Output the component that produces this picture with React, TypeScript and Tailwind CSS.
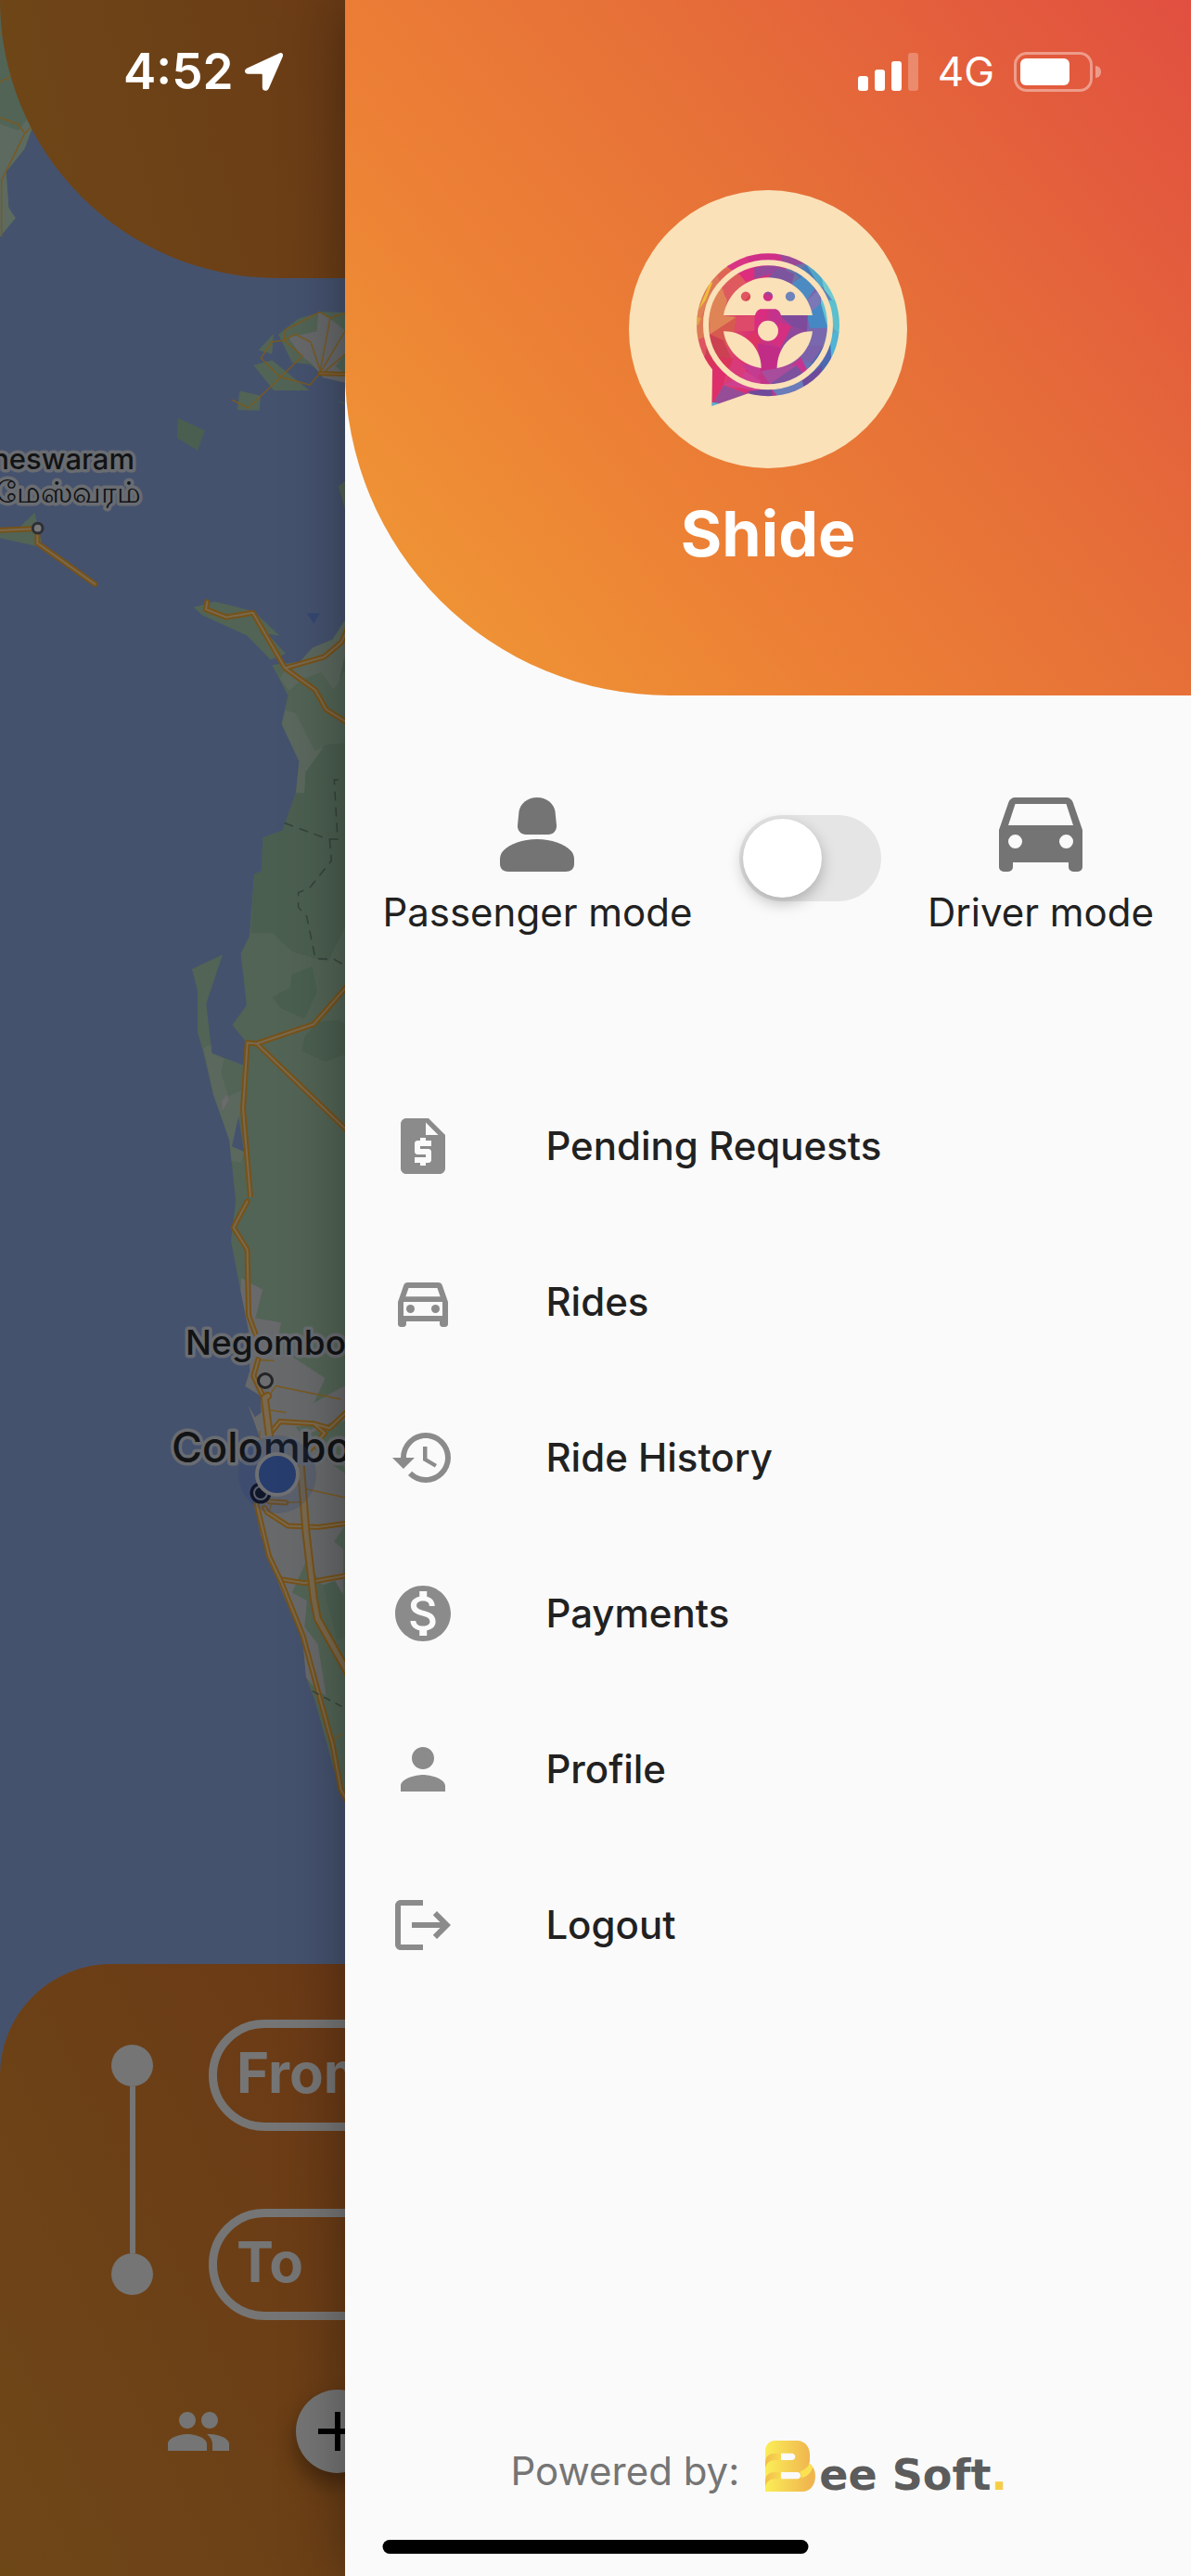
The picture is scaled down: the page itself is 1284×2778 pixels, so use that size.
import React from "react";
import {
  MdAdd,
  MdHistory,
  MdMonetizationOn,
  MdOutlineDirectionsCar,
  MdPeople,
  MdPerson,
  MdRequestQuote,
} from "react-icons/md";

const LogoutIcon = ({ className }: { className?: string }) => (
  <svg viewBox="0 0 24 24" fill="currentColor" className={className} aria-hidden="true">
    <path d="M17 7l-1.41 1.41L18.17 11H8v2h10.17l-2.58 2.58L17 17l5-5zM4 5h8V3H4c-1.1 0-2 .9-2 2v14c0 1.1.9 2 2 2h8v-2H4V5z" />
  </svg>
);

const CarIcon = ({ className }: { className?: string }) => (
  <svg viewBox="0 0 24 24" fill="currentColor" className={className} aria-hidden="true">
    <path d="M5 11l1.5-4.6h11L19 11zM17.5 16a1.5 1.5 0 1 1 0-3 1.5 1.5 0 0 1 0 3zm-11 0a1.5 1.5 0 1 1 0-3 1.5 1.5 0 0 1 0 3zM18.92 6c-.2-.58-.76-1-1.42-1h-11c-.66 0-1.22.42-1.42 1L3 12v8a1 1 0 0 0 1 1h1a1 1 0 0 0 1-1v-1h12v1a1 1 0 0 0 1 1h1a1 1 0 0 0 1-1v-8z" />
  </svg>
);

const PassengerIcon = ({ className }: { className?: string }) => (
  <svg viewBox="0 0 120 120" fill="currentColor" className={className} aria-hidden="true">
    <path d="M60 25c11 0 18 7 19.500 15l1.500 15c.5 6-4 10-9 10H48c-5 0-9.500-4-9-10l1.500-15C42 32 49 25 60 25z" />
    <path d="M60 70c16 0 29 5 36 12 3 3 4 6 4 10v5c0 5-4 8-9 8H29c-5 0-9-3-9-8v-5c0-4 1-7 4-10 7-7 20-12 36-12z" />
  </svg>
);

const facets: [string, string][] = [
  ["333,278 440,278 430,400 333,480", "#dd7756"],
  ["333,430 378,400 350,480 333,520", "#df8456"],
  ["340,460 375,375 385,372 362,430", "#eec03b"],
  ["333,485 358,490 350,520 333,510", "#e3a34b"],
  ["400,350 440,318 470,350 420,395", "#df6455"],
  ["430,320 490,278 515,335 470,350", "#d93484"],
  ["490,278 620,278 600,318 515,335", "#cf2f86"],
  ["470,345 520,325 518,362 490,370", "#dd2d7c"],
  ["415,385 470,345 492,372 430,430", "#df5a5f"],
  ["370,430 405,378 432,430 420,480 462,485 378,540", "#df8456"],
  ["333,520 372,440 378,540 340,570", "#dd7b56"],
  ["378,540 462,485 450,560 405,605", "#d75a4f"],
  ["333,560 378,540 405,605 360,640", "#de5560"],
  ["375,540 420,560 445,620 360,610", "#cb4152"],
  ["355,610 450,618 470,660 384,690", "#d9355b"],
  ["462,485 530,478 520,530 455,530", "#de4a6a"],
  ["384,640 430,660 420,705 382,773", "#dd2f6b"],
  ["420,705 500,735 382,773", "#954d97"],
  ["420,703 475,650 540,690 530,725", "#cf4190"],
  ["450,618 500,640 480,680 425,700", "#d93a79"],
  ["480,640 545,640 530,690", "#c33c92"],
  ["520,325 580,315 620,330 520,362", "#94489a"],
  ["600,278 690,310 640,345 620,330", "#984a97"],
  ["618,322 690,310 680,350 640,375", "#6f72a5"],
  ["560,360 600,325 650,345 640,378", "#7c559f"],
  ["650,340 700,310 735,380 700,400", "#4a79b5"],
  ["640,375 690,345 715,395 690,430", "#4c8bc2"],
  ["685,310 740,345 760,395 730,385", "#52a7c8"],
  ["735,345 795,400 780,440 745,395", "#6dcad0"],
  ["760,430 795,430 795,540 775,520", "#5bbfce"],
  ["690,430 735,390 730,470 690,480", "#7a78b7"],
  ["735,395 765,460 757,520 735,460", "#64c4d3"],
  ["690,480 735,440 757,520 705,545", "#4688c4"],
  ["603,478 692,478 690,535 640,515", "#7e4a9c"],
  ["640,515 692,530 670,580 605,585", "#8d4a9a"],
  ["692,520 757,520 745,575 680,580", "#7968ae"],
  ["670,580 745,575 720,640 670,620", "#7b61a9"],
  ["760,545 795,530 780,610 760,640", "#51b3d5"],
  ["745,575 765,560 770,640 700,690 690,655", "#4c68b0"],
  ["640,640 670,615 690,655 655,690", "#c53590"],
  ["540,660 655,640 625,690 570,702", "#a84c9c"],
  ["570,702 655,642 690,680 640,720", "#7c529e"],
  ["575,716 680,690 700,700 600,745", "#6a7cba"],
  ["500,725 575,716 580,745 500,742", "#6f4a9b"],
  ["675,690 740,640 730,690 680,715", "#6c4a9c"],
  ["521,455 565,455 555,495 520,530", "#d92e80"],
  ["565,455 606,455 600,510 570,495", "#c5328c"],
  ["520,530 540,560 530,600 470,580", "#dd3563"],
  ["600,500 640,515 605,585 570,570", "#d42f80"],
  ["530,570 605,585 590,650 540,660", "#c12d86"],
  ["474,400 510,400 510,410 485,436 474,436", "#df5560"],
  ["510,408 510,436 484,436", "#d4454f"],
  ["546,400 582,400 582,436 546,436", "#cf2f86"],
  ["546,400 582,400 582,416 560,412", "#94489a"],
  ["618,400 654,400 654,436 618,436", "#6f83bb"],
];

const ShideMark = ({ className }: { className?: string }) => (
  <svg viewBox="333 278 462 495" className={className} role="img" aria-label="Shide logo">
    <defs>
      <linearGradient id="wheelBase" x1="0" y1="0.4" x2="1" y2="0.6">
        <stop offset="0" stopColor="#df7555" />
        <stop offset="0.4" stopColor="#d92f75" />
        <stop offset="0.62" stopColor="#b33a93" />
        <stop offset="0.85" stopColor="#5b7dbb" />
        <stop offset="1" stopColor="#55bfd0" />
      </linearGradient>
      <mask id="wheel" maskUnits="userSpaceOnUse" x="333" y="278" width="462" height="495">
        <circle cx="564" cy="510" r="231" fill="#fff" />
        <path d="M384 640V656L382 773L500 732L530 700z" fill="#fff" />
        <circle cx="564" cy="510" r="201" fill="none" stroke="#000" strokeWidth="18" />
        <path d="M420 479C434 404 496 357 564 357s130 47 144 122H606c-4-12-10-20-22-20h-40c-12 0-18 8-22 20z" fill="#000" />
        <circle cx="492" cy="418" r="15.500" fill="#fff" />
        <circle cx="564" cy="418" r="15.500" fill="#fff" />
        <circle cx="636" cy="418" r="15.500" fill="#fff" />
        <circle cx="564" cy="529" r="33" fill="#000" />
        <path d="M420 531C490 530 542 585 542 650C480 642 430 595 420 531z" fill="#000" />
        <path d="M708 531C638 530 594 585 593 650C650 642 700 595 708 531z" fill="#000" />
      </mask>
    </defs>
    <g mask="url(#wheel)">
      <rect x="333" y="278" width="462" height="495" fill="url(#wheelBase)" />
      {facets.map(([points, fill]) => (
        <polygon key={points} points={points} fill={fill} />
      ))}
      <path d="M382 760l25 4-25 12z" fill="#51b3d5" />
    </g>
  </svg>
);

const BeeMark = ({ className }: { className?: string }) => (
  <svg viewBox="42 39 162 165" className={className} aria-hidden="true">
    <defs>
      <linearGradient id="bee">
        <stop offset="0" stopColor="#fbee57" />
        <stop offset="0.9" stopColor="#f0b54f" />
      </linearGradient>
      <linearGradient id="beeFold">
        <stop offset="0" stopColor="#f2bd4c" />
        <stop offset="1" stopColor="#f8da52" />
      </linearGradient>
    </defs>
    <path
      fillRule="evenodd"
      fill="url(#bee)"
      d="M75 39h70c24 0 41 20 41 44v20c0 6-1 8-2 10 12 8 20 20 20 40 0 32-18 51-42 51H42V75c0-22 12-36 33-36zM93 80v22h34c16 0 16-22 0-22zM93 141v22h52c15 0 15-22 0-22z"
    />
    <path d="M42 128V107c2-18 13-27 31-27h20v22H73c-15 0-27 10-31 26z" fill="url(#beeFold)" />
    <path d="M42 188V168c2-18 13-27 31-27h20v22H73c-15 0-27 9-31 25z" fill="url(#beeFold)" />
    <path d="M155 160c22-2 37-18 41-36-9-10-10-11-12-11-3 12-16 20-32 28 8 5 8 14 3 19z" fill="#fbe253" />
  </svg>
);

const Road = ({ d, wide = 7 }: { d: string; wide?: number }) => (
  <g fill="none" strokeLinecap="round" strokeLinejoin="round">
    <path d={d} stroke="#775218" strokeWidth={wide} vectorEffect="non-scaling-stroke" />
    <path d={d} stroke="#79694f" strokeWidth={wide - 4} vectorEffect="non-scaling-stroke" />
  </g>
);

const Trail = ({ d }: { d: string }) => (
  <path d={d} fill="none" stroke="#785a22" strokeWidth="1.500" vectorEffect="non-scaling-stroke" />
);

const CoastMap = () => (
  <svg
    viewBox="0 0 1284 2778"
    preserveAspectRatio="xMinYMin slice"
    className="absolute inset-0 h-full w-full"
    role="img"
    aria-label="Map of the coast"
  >
    <rect width="1284" height="2778" fill="#45526e" />
    {/* northern islands */}
    <g transform="scale(.33333 .44643)">
      <path d="M0 0H60L110 300 80 360 20 415 28 502 50 527 0 572z" fill="#526455" />
      <path d="M0 300 60 315 90 285 102 312 78 360 20 415 28 502 50 527 0 572z" fill="#5d6a60" />
      <Trail d="M0 82h8M0 198 36 184M0 284 58 300 80 322 5 436V572M80 322 110 300" />
      <path d="M900 808 965 770 1040 753 1120 755V900H1040L1000 880 945 876z" fill="#526455" />
      <path d="M932 815 1025 800 1030 753 1068 770 1120 800V925L1045 912 1010 880 975 860z" fill="#66686a" />
      <path d="M1085 885 1120 850V905z" fill="#526455" />
      <path d="M836 846 885 806 880 855zM820 882 880 870 1000 943H885zM775 944 843 956 839 992 768 990z" fill="#526455" />
      <path d="M576 1010 663 1040 639 1088 573 1058z" fill="#4b5f50" />
      <path d="M1092 967 1120 975V980zM1095 1175 1120 1160V1240z" fill="#526455" />
      <Trail d="M748 965 803 986 978 860 920 822 880 826 844 865 905 910 1002 930 1034 902M920 822 922 797 1035 754 1068 768 1120 756M920 822 955 807 1005 826 1036 895 1068 768M1040 895 1120 795M1050 898 1120 853" />
      <Road d="M1034 902 1120 904" wide={5} />
      <path d="M60 1275 113 1238 122 1275 135 1308 122 1320 0 1300V1282z" fill="#526455" />
      <Road d="M0 1281 121 1277V1312L307 1411" wide={6} />
      <ellipse cx="122" cy="1276" rx="16" ry="12" fill="#77787a" stroke="#2d2f33" strokeWidth="3" vectorEffect="non-scaling-stroke" />
    </g>
    {/* central coast */}
    <g transform="translate(0 600) scale(.33333 .44643)">
      <path d="M626 123 695 109 822 133 905 192 865 187 925 235 875 250 800 192 655 142z" fill="#526455" />
      <path d="M992 137H1035L1015 163z" fill="#364871" />
      <path d="M970 255 1010 221 1075 201 1120 150V1568H764L742 1410 690 1300 655 1190 639 1150V1050L621 997 720 962 667 1080 685 1200 790 1230 798 1175 751 1132 807 1075 779 960 807 918 822 768 846 760 850 679 914 662 955 575 969 491 911 405 933 338 880 262z" fill="#526455" />
      <path d="M935 325 1040 280 1120 250V890L1060 980 945 955 880 910H812L822 768 846 760 850 679 914 662 955 575 985 570 988 522 940 375 925 350z" fill="#4b5f50" />
      <path d="M935 325 1040 280 1080 320 1120 270V450L1050 455 988 522 955 378 920 372 933 338z" fill="#526455" />
      <path d="M970 255 1010 221 1075 201 1120 150V220L1096 305 1078 322 1040 280 980 295 935 325 905 295 925 272z" fill="#5b685e" />
      <path d="M922 372 955 378 1018 470 1045 462 988 522 967 495 911 405z" fill="#5b685e" />
      <path d="M967 495 988 522 984 572 958 570z" fill="#5b685e" />
      <path d="M812 910 880 912 943 1010 938 1042 880 1065 800 1100 779 960z" fill="#526455" />
      <path d="M880 1065 938 1042 943 1010 1010 990 1026 1052 984 1117 910 1092z" fill="#4a5f50" />
      <path d="M985 1160 1030 1124 1095 1120 1120 1130V1202L1052 1221 976 1195z" fill="#4b5f50" />
      <path d="M658 1187 682 1180 685 1200 725 1213 715 1245 738 1305 780 1290 775 1350 750 1425 790 1438 780 1465 748 1460 742 1410 690 1300z" fill="#5b685e" />
      <path d="M771 1355 790 1438 750 1425z" fill="#45526e" />
      <path d="M717 1315 735 1300 740 1315 718 1340z" fill="#6b6a6c" />
      <path
        d="M920 644 1060 683H1092L1081 540H1120M1066 683 1072 735 1000 802 965 812V848L992 870 1020 972 1080 973 1120 990"
        fill="none"
        stroke="#36433b"
        strokeWidth="1.500"
        strokeDasharray="10 7"
        vectorEffect="non-scaling-stroke"
      />
      <Road d="M670 110 666 128 732 147 818 136 922 270 1020 323 1055 370 1120 400M922 270 1048 243 1105 207 1130 165" wide={6} />
      <Road d="M1130 1032 1015 1130 830 1177 800 1175 786 1335 810 1548 780 1590M830 1177 1130 1392" wide={6} />
    </g>
    {/* southern coast */}
    <g transform="translate(0 1300) scale(.33333 .44643)">
      <path d="M764 -20H1120V1430L1100 1415 1018 1195 990 1140 978 1040 910 930 843 795 825 720 840 560 803 483 825 512 845 500 843 460 793 437 808 400 805 305 778 205 747 85z" fill="#526455" />
      <path d="M780 175 850 203 826 272 910 283 890 350 945 365 1052 417 1015 477 1120 433V770L1080 812 1110 830V940L1083 907 1043 917 990 860 945 935 993 955 985 1018 1028 1060 1055 1185 1018 1165 990 1140 978 1040 910 930 843 795 825 720 840 560 803 483 825 512 845 500 843 460 793 437 808 400 805 305 778 205z" fill="#68696b" />
      <path d="M955 535 1120 520V560L1100 600 1120 650 1030 600z" fill="#526455" />
      <path d="M1045 917 1083 907 1120 955V1040L1090 1050z" fill="#4d6152" />
      <path d="M970 560 1120 500" stroke="#68696b" strokeWidth="8" />
      <Trail d="M836 373 887 375M870 460 893 436 1103 468M870 494 925 500M990 685 1120 706M880 715 870 740M925 718 970 716M1075 1292 1107 1276M840 545V570" />
      <Road d="M800 -10 755 53 800 107 804 265 832 322M835 372 820 412 850 460" wide={6} />
      <Road d="M880 545 905 522 1015 527 1065 538 1120 500M1015 527 1050 550 1000 592M870 715 925 718" wide={6} />
      <Road d="M855 730 865 742 932 774 1030 777 1120 768M907 903 985 912 1120 894" wide={6} />
      <Road d="M830 722 870 847 910 910 980 1040 1040 1205 1075 1300 1103 1412 1125 1440" wide={6} />
      <Road d="M866 460 856 465 872 560M972 620 990 790 1015 950 1027 998 1130 1135" wide={9} />
      <path d="M1010 1173 1120 1216" stroke="#36433b" strokeWidth="1.500" strokeDasharray="8 6" vectorEffect="non-scaling-stroke" />
    </g>
    <g
      fontFamily="Inter, 'Noto Sans', sans-serif"
      fontWeight="500"
      fill="#121315"
      stroke="#696c71"
      strokeWidth="7"
      strokeLinejoin="round"
      paintOrder="stroke"
    >
      <text x="145" y="506" fontSize="31" textAnchor="end">neswaram</text>
      <text x="152" y="542" fontSize="32" textAnchor="end" fontWeight="400">மேஸ்வரம்</text>
      <text x="200" y="1461" fontSize="37">Negombo</text>
      <text x="185" y="1577" fontSize="45">Colombo</text>
    </g>
    <circle cx="286" cy="1489" r="7.500" fill="#6c6d6f" stroke="#242426" strokeWidth="3" />
    <circle cx="281" cy="1610" r="9" fill="#0b0d16" stroke="#0b0d16" strokeWidth="5" />
    <circle cx="281" cy="1610" r="7" fill="#0b0d16" stroke="#686a70" strokeWidth="2" />
    <circle cx="299" cy="1590" r="42" fill="#233c75" fillOpacity="0.2" />
    <circle cx="299" cy="1590" r="22" fill="#263d6e" stroke="#6f7074" strokeWidth="4" />
  </svg>
);

const StatusBar = () => (
  <div className="pointer-events-none absolute inset-x-0 top-0 z-20 flex h-[154px] items-center justify-between pr-[97px] pl-[133px] text-white">
    <div className="flex items-center gap-3">
      <span className="text-[53px] leading-none font-semibold">4:52</span>
      <svg viewBox="0 0 41 41" className="h-[41px] w-[41px]" fill="currentColor" aria-hidden="true">
        <path d="M37.500.3c2.500-.9 4.500 1.200 3.300 3.700L25.700 38.500c-1.700 3.600-6.900 3-6.900-1.200V24c0-.8-.4-1.200-1.200-1.200H3.500c-4 0-4.800-4.700-1.100-6.300z" />
      </svg>
    </div>
    <div className="flex items-center gap-[21px]">
      <div className="flex items-end gap-[7px]" role="img" aria-label="Signal, three of four bars">
        <span className="h-4 w-[11px] rounded-[3px] bg-white" />
        <span className="h-[23px] w-[11px] rounded-[3px] bg-white" />
        <span className="h-8 w-[11px] rounded-[3px] bg-white" />
        <span className="h-[41px] w-[11px] rounded-[3px] bg-white/25" />
      </div>
      <span className="text-[44px] leading-none">4G</span>
      <div className="flex items-center gap-[3px]" role="img" aria-label="Battery">
        <div className="h-[43px] w-[85px] rounded-[14px] border-[3px] border-white/40 p-1">
          <div className="h-full w-[53px] rounded-md bg-white" />
        </div>
        <span className="h-[13px] w-[6px] rounded-r-full bg-white/40" />
      </div>
    </div>
  </div>
);

const PlaceField = ({ label }: { label: string }) => (
  <input
    aria-label={label}
    placeholder={label}
    className="h-[120px] w-full rounded-full border-[9px] border-[#757575] bg-transparent px-[21px] pb-[6px] text-[60px] font-bold text-[#757575] placeholder:text-[#757575]"
  />
);

const RideScreen = () => (
  <div className="absolute inset-0 flex flex-col justify-between overflow-hidden">
    <CoastMap />
    <header className="relative h-[300px] rounded-bl-[300px] bg-[linear-gradient(77deg,#6e4717,#6b3b16_34%,#68261d)]" />
    <section className="relative rounded-tl-[120px] bg-[linear-gradient(63deg,#6e4717,#6b3b16_38%,#68261d)] pt-[60px] pb-[111px]">
      <div className="flex pr-[120px] pl-[120px]">
        <div className="mt-[27px] flex w-[45px] flex-col items-center">
          <span className="size-[45px] rounded-full bg-[#757575]" />
          <span className="h-[180px] w-[6px] bg-[#757575]" />
          <span className="size-[45px] rounded-full bg-[#757575]" />
        </div>
        <div className="ml-[60px] flex flex-1 flex-col gap-[84px]">
          <PlaceField label="From" />
          <PlaceField label="To" />
        </div>
      </div>
      <div className="mt-[75px] flex items-center gap-[69px] pl-[178px]">
        <MdPeople className="size-[72px] text-[#757575]" />
        <button
          type="button"
          aria-label="Add passenger"
          className="flex size-[90px] items-center justify-center rounded-full bg-[#757575] text-black shadow-[0_12px_24px_rgba(0,0,0,0.4)]"
        >
          <MdAdd className="size-[72px]" />
        </button>
      </div>
    </section>
  </div>
);

const menu = [
  { label: "Pending Requests", Icon: MdRequestQuote },
  { label: "Rides", Icon: MdOutlineDirectionsCar },
  { label: "Ride History", Icon: MdHistory },
  { label: "Payments", Icon: MdMonetizationOn },
  { label: "Profile", Icon: MdPerson },
  { label: "Logout", Icon: LogoutIcon },
];

const Drawer = () => (
  <aside className="relative z-10 ml-auto flex min-h-screen w-[71%] flex-col bg-[#fafafa] shadow-[0_0_60px_rgba(0,0,0,0.35)]">
    <header className="flex flex-col items-center rounded-bl-[350px] bg-[linear-gradient(51deg,#f09b35,#ec8035_35%,#e67038_60%,#e14f40)] pt-[205px] pb-[130px]">
      <div className="flex size-[300px] items-center justify-center rounded-full bg-[#fae1b8]">
        <ShideMark className="h-[165px] w-[154px]" />
      </div>
      <h1 className="mt-[25px] text-[68px] leading-[90px] font-bold text-white">Shide</h1>
    </header>

    <div className="flex items-center justify-between px-10 pt-[85px] pb-[144px] text-[#212121]">
      <div className="flex flex-col items-center gap-[5px]">
        <PassengerIcon className="size-[120px] text-[#747474]" />
        <span className="text-[42px] leading-[48px]">Passenger mode</span>
      </div>
      <input
        type="checkbox"
        role="switch"
        aria-label="Driver mode"
        className="mt-2 h-[93px] w-[153px] appearance-none rounded-full bg-[#e5e5e5] p-1 before:block before:size-[85px] before:rounded-full before:bg-white before:shadow-[0_6px_16px_rgba(0,0,0,0.25)] checked:bg-[#e67038] checked:before:ml-[60px]"
      />
      <div className="flex flex-col items-center gap-[5px]">
        <CarIcon className="size-[120px] text-[#747474]" />
        <span className="text-[42px] leading-[48px]">Driver mode</span>
      </div>
    </div>

    <nav>
      <ul>
        {menu.map(({ label, Icon }) => (
          <li key={label}>
            <a href="#" className="flex h-[168px] items-center gap-24 px-12">
              <Icon className="size-[72px] text-[#8b8b8b]" />
              <span className="text-[42px] leading-[48px] font-medium text-[#212121]">{label}</span>
            </a>
          </li>
        ))}
      </ul>
    </nav>

    <footer className="mt-auto flex items-center justify-center gap-7 pr-5 pb-[81px]">
      <span className="text-[42px] leading-[54px] text-[#757575]">Powered by:</span>
      <div className="flex items-end gap-1 pb-[10px]">
        <BeeMark className="h-[55px] w-[54px]" />
        <span className="font-['DejaVu_Sans',sans-serif] text-[46px] leading-[36px] font-bold text-[#5c5c5c]">
          ee Soft<span className="text-[#f7cd46]">.</span>
        </span>
      </div>
    </footer>
  </aside>
);

export default function App() {
  return (
    <main className="relative min-h-screen overflow-hidden font-['Inter','Noto_Sans',sans-serif]">
      <RideScreen />
      <Drawer />
      <StatusBar />
      <div className="absolute bottom-6 left-1/2 z-20 h-[15px] w-[459px] -translate-x-1/2 rounded-full bg-black" />
    </main>
  );
}
